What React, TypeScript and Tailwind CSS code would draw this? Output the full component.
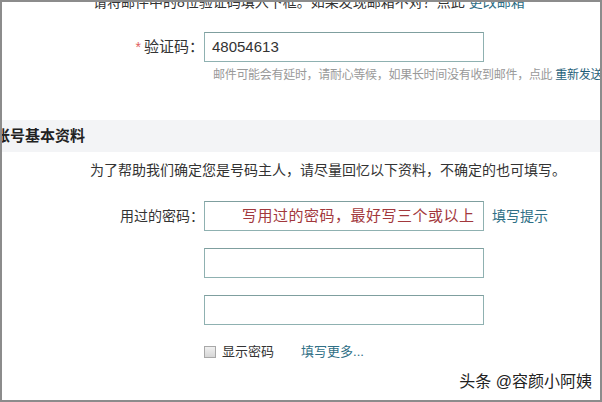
export default function App() {
  const font = { fontFamily: '"Liberation Sans", "Noto Sans CJK SC", sans-serif' }
  const box = "w-[280px] h-[30px] border border-[#8fb1b1] border-t-[#7f9f9f] bg-white"
  const link = "text-[#2f6f86]"

  return (
    <div style={font} className="relative w-[602px] h-[402px] overflow-hidden border-2 border-[#8c8c8c] bg-white text-[#333]">
      {/* cut-off line from the step above */}
      <div className="-mt-[10px] h-[20px] pl-[91px] text-[14px] leading-[20px] whitespace-nowrap">
        请将邮件中的8位验证码填入下框。如果发现邮箱不对？点此 <span className={link}>更改邮箱</span>
      </div>

      <div className="mt-[20px] flex items-center h-[30px]">
        <div className="w-[202px] text-right text-[15px] whitespace-nowrap">
          <span className="text-[#e06060] mr-[3px] text-[14px]">*</span>验证码：
        </div>
        <div className={`${box} flex items-center pl-[7px] text-[15px] text-[#333]`}>48054613</div>
      </div>

      <div className="mt-[5px] h-[16px] pl-[211px] text-[12px] leading-[16px] tracking-[-0.3px] text-[#999] whitespace-nowrap">
        邮件可能会有延时，请耐心等候，如果长时间没有收到邮件，点此 <span className="text-[#1f5f7a]">重新发送</span>
      </div>

      <div className="mt-[37px] h-[32px] flex items-center bg-[#f3f4f6]">
        <span className="-ml-[7px] text-[15px] font-bold text-[#222]">账号基本资料</span>
      </div>

      <div className="mt-[8px] h-[20px] pl-[88px] text-[14px] leading-[20px] whitespace-nowrap">
        为了帮助我们确定您是号码主人，请尽量回忆以下资料，不确定的也可填写。
      </div>

      <div className="mt-[21px] flex items-center h-[30px]">
        <div className="w-[202px] text-right text-[14px]">用过的密码：</div>
        <div className={`${box} flex items-center pl-[37px] text-[15px] tracking-[0.5px] text-[#a2383c] whitespace-nowrap`}>
          写用过的密码，最好写三个或以上
        </div>
        <span className={`ml-[8px] text-[14px] ${link}`}>填写提示</span>
      </div>

      <div className="mt-[17px] flex">
        <div className="w-[202px]" />
        <div className={box} />
      </div>

      <div className="mt-[17px] flex">
        <div className="w-[202px]" />
        <div className={box} />
      </div>

      <div className="mt-[17px] h-[20px] flex items-center">
        <div className="w-[202px]" />
        <div className="w-[12px] h-[12px] border border-[#a8a8a8] bg-gradient-to-b from-[#f0f0f0] to-[#d6d6d6]" />
        <span className="ml-[6px] text-[13px]">显示密码</span>
        <span className={`ml-[27px] text-[13px] ${link}`}>填写更多...</span>
      </div>

      <div className="absolute right-[8px] top-[369px] text-[16px] leading-[22px] text-[#222] whitespace-nowrap">
        头条 @容颜小阿姨
      </div>
    </div>
  )
}
